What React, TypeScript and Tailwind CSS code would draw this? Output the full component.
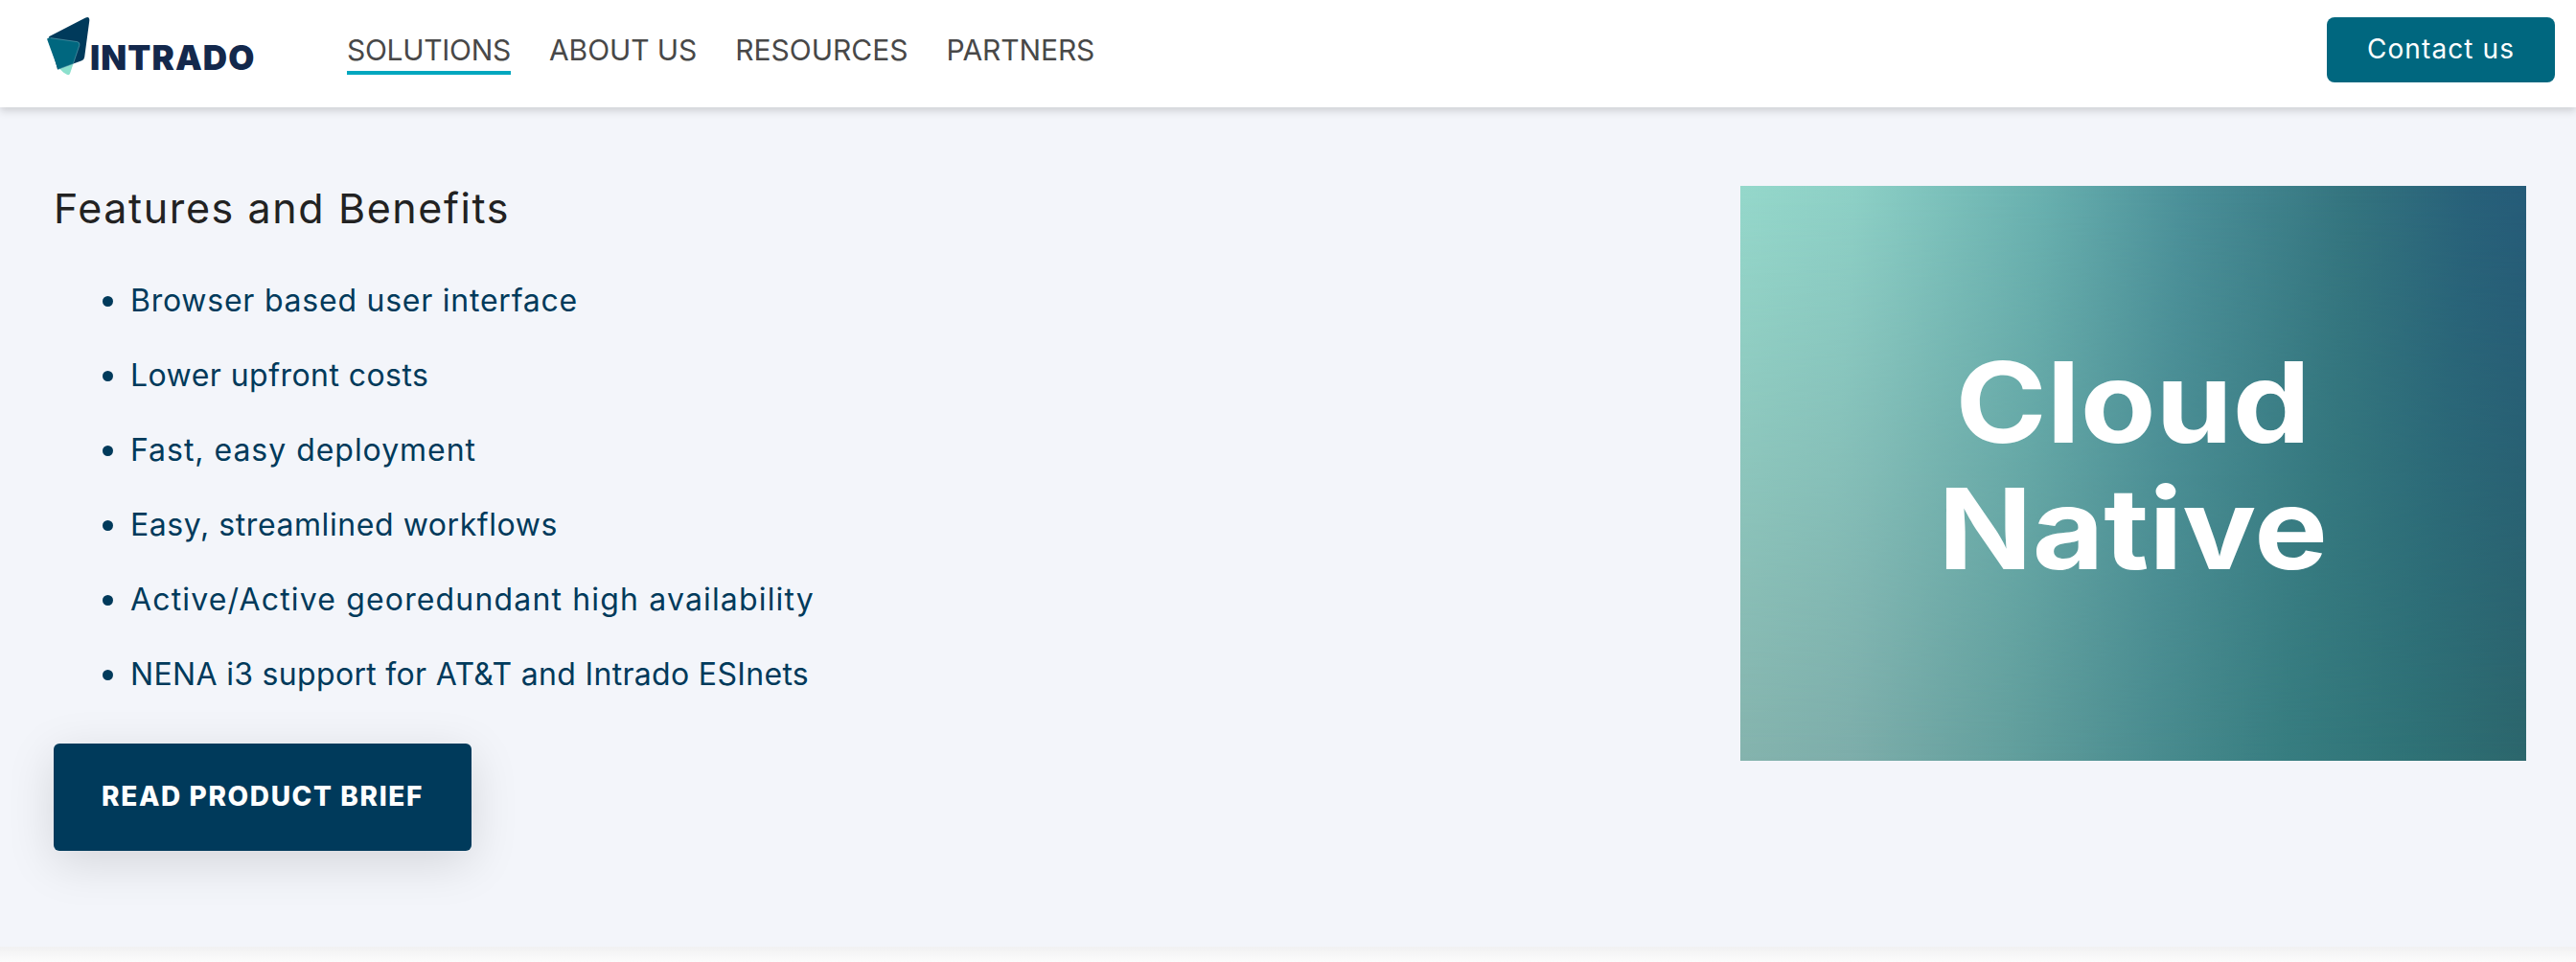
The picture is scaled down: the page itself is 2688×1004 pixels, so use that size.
const navLinks = [
  { label: "SOLUTIONS", active: true, spacing: "tracking-[-0.3px]" },
  { label: "ABOUT US", active: false, spacing: "tracking-[-0.1px]" },
  { label: "RESOURCES", active: false, spacing: "tracking-normal" },
  { label: "PARTNERS", active: false, spacing: "tracking-[-0.1px]" },
];

const features = [
  { text: "Browser based user interface", spacing: "tracking-[0.76px]" },
  { text: "Lower upfront costs", spacing: "tracking-[0.45px]" },
  { text: "Fast, easy deployment", spacing: "tracking-[0.97px]" },
  { text: "Easy, streamlined workflows", spacing: "tracking-[0.57px]" },
  { text: "Active/Active georedundant high availability", spacing: "tracking-[1.16px]" },
  { text: "NENA i3 support for AT&T and Intrado ESInets", spacing: "tracking-[0.32px]" },
];

function Logo() {
  return (
    <a href="#" className="flex h-[72px] w-[314px] items-start">
      <svg className="h-16 w-[46px] shrink-0" viewBox="48 16 46 64" strokeLinejoin="round">
        <path d="M62 71.5 L76.5 66.5 L73.2 76.3 Q72.3 79 69.8 77.8 L66 75.6 Z" fill="#8ce0cd" />
        <path
          d="M51 38.2 L88.8 18.7 Q93.6 16.4 93.3 21.5 L88.2 59.5 Q87.8 62.4 85.4 63.2 L60 72.5 Z"
          fill="#003a5b"
        />
        <path
          d="M52.6 39.6 L80.6 43.6 Q83.6 44.3 82.9 47.2 L76.4 66.6 L60.6 72.4 L49.4 41.8 Q48.6 39 52.6 39.6 Z"
          fill="#00677f"
        />
        <path
          d="M52.6 39.6 L80.6 43.6 Q83.6 44.3 82.9 47.2 L76.4 66.6 L61 72.3"
          fill="none"
          stroke="#7fb5c0"
          strokeWidth="0.5"
        />
      </svg>
      <span className="mt-[26px] text-[35px] leading-9 font-black tracking-[1.1px] text-[#13284c]">INTRADO</span>
    </a>
  );
}

function Header() {
  return (
    <header className="relative z-10 flex h-28 items-center bg-white pr-[22px] pb-2 pl-12 shadow-[0_4px_8px_rgba(0,0,0,0.15)]">
      <Logo />
      <nav className="flex flex-1 gap-10">
        {navLinks.map((link) => (
          <a
            key={link.label}
            href="#"
            className={`flex h-[52px] items-end border-b-4 text-[30px] leading-[44px] whitespace-nowrap text-[#484848] ${link.spacing} ${
              link.active ? "border-[#00a7bf]" : "border-transparent"
            }`}
          >
            {link.label}
          </a>
        ))}
      </nav>
      <a
        href="#"
        className="flex h-[68px] w-[238px] items-center justify-center rounded-lg bg-[#00677f] pb-0.5 text-[28px] tracking-[1.1px] text-white"
      >
        Contact us
      </a>
    </header>
  );
}

function CloudCard() {
  return (
    <div className="relative flex h-[600px] w-[820px] shrink-0 items-center justify-center overflow-hidden bg-[linear-gradient(94deg,#95d8cb_0%,#8dd0c6_14%,#68b0af_37%,#4b9099_54%,#34747f_74%,#28617a_88%,#245878_100%)] pb-4">
      {/* Muted green tones fade in towards the bottom edge */}
      <div className="absolute inset-0 bg-[linear-gradient(94deg,#87b5ae_0%,#7dadaa_18%,#639f9d_37%,#4b8d90_54%,#377d80_71%,#2f7276_86%,#2c666c_100%)] mask-t-from-0% mask-t-to-100%" />
      <h3 className="relative scale-x-110 text-center text-[117px] leading-[132px] font-bold text-white">
        Cloud
        <br />
        Native
      </h3>
    </div>
  );
}

export default function App() {
  return (
    <div className="flex min-h-screen flex-col bg-white font-['Inter',sans-serif]">
      <Header />
      <section className="flex h-[876px] items-start justify-between bg-[#f3f5fa] pt-[82px] pr-[52px] pl-14">
        <div>
          <h2 className="text-[43px] leading-[46px] tracking-[1.6px] text-[#222222]">Features and Benefits</h2>
          <ul className="mt-[50px] flex flex-col gap-[30px] pl-[51px] text-[32px] leading-[48px] text-[#003a5b]">
            {features.map((item) => (
              <li key={item.text} className={`flex items-center gap-[18px] ${item.spacing}`}>
                <span className="size-[11px] rounded-full bg-[#003a5b]" />
                {item.text}
              </li>
            ))}
          </ul>
          <a
            href="#"
            className="mt-12 flex h-28 w-[436px] items-center justify-center rounded-md bg-[#003a5b] pb-0.5 text-[28px] font-extrabold tracking-[1.6px] text-white shadow-[0_12px_50px_rgba(0,0,0,0.13)]"
          >
            READ PRODUCT BRIEF
          </a>
        </div>
        <CloudCard />
      </section>
      <div className="h-4 bg-linear-to-b from-[#f1f1f2] to-[#fcfcfc]" />
    </div>
  );
}
